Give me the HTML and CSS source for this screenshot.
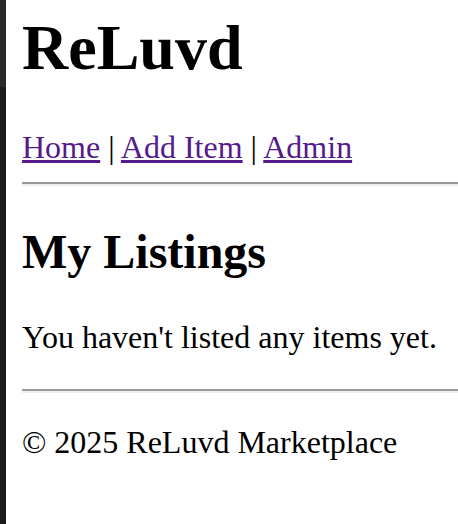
FILE: index.html
```html
<!DOCTYPE html>
<html lang="en">
<head>
<meta charset="utf-8">
<title>ReLuvd</title>
<link rel="stylesheet" href="styles.css">
</head>
<body>
<div class="page">
  <header class="site-header">
    <h1 class="brand">ReLuvd</h1>
    <nav class="nav"><a href="#">Home</a> | <a href="#">Add Item</a> | <a href="#">Admin</a></nav>
  </header>
  <hr class="rule">
  <main>
    <h2 class="section-title">My Listings</h2>
    <p class="empty">You haven't listed any items yet.</p>
  </main>
  <hr class="rule rule-footer">
  <footer class="footer">© 2025 ReLuvd Marketplace</footer>
</div>
</body>
</html>
```

FILE: styles.css
```css
html, body {
  margin: 0;
  padding: 0;
  height: 100%;
}
body {
  font-family: "Liberation Serif", "Times New Roman", serif;
  color: #000;
  background:
    linear-gradient(to bottom, #2a2a2a 0, #2a2a2a 87px, #1c1c1c 87px) no-repeat left top / 6px 100%,
    #fff;
  overflow: hidden;
}
.page {
  padding: 0 0 0 22px;
}
.brand {
  font-size: 64px;
  font-weight: bold;
  margin: 11px 0 44px;
}
.nav {
  font-size: 32px;
}
.nav a {
  color: #551a8b;
  text-decoration: underline;
}
.rule {
  margin: 16px 0 0;
  height: 0;
  border: 0;
  border-top: 2px solid #9a9a9a;
  border-bottom: 2px solid #eeeeee;
}
.section-title {
  font-size: 48px;
  font-weight: bold;
  margin: 38px 0 0;
}
.empty {
  font-size: 32px;
  margin: 40px 0 0;
}
.rule-footer {
  margin-top: 33px;
}
.footer {
  font-size: 32px;
  margin-top: 31px;
}
```
